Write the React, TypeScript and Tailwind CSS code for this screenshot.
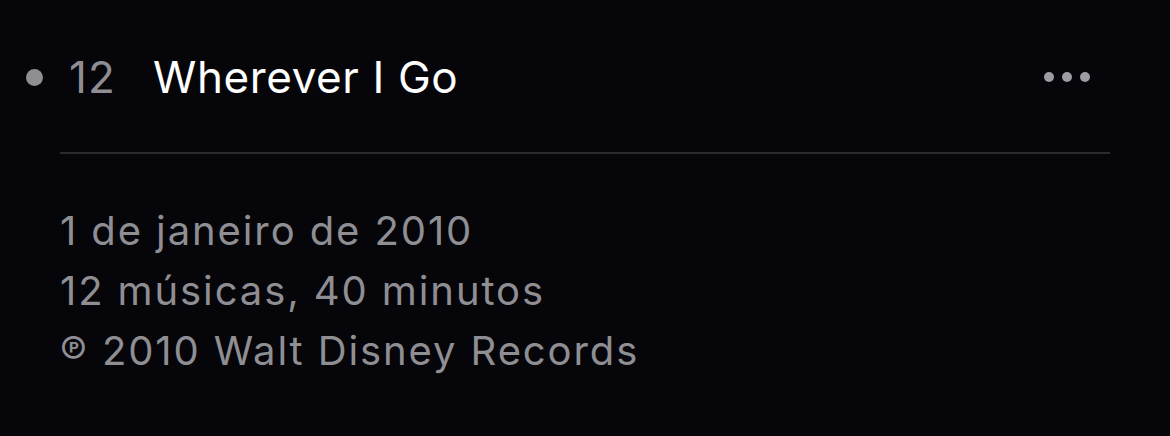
export default function App() {
  const info = ["1 de janeiro de 2010", "12 músicas, 40 minutos", "℗ 2010 Walt Disney Records"];
  return (
    <div className="w-[1170px] h-[436px] bg-[#060509] font-['Inter',sans-serif] overflow-hidden">
      {/* Track row */}
      <div className="flex items-center h-[152px] pt-[2px] pl-[26px] pr-[80px]">
        <span className="w-[17px] h-[17px] rounded-full bg-[#8e8e93] shrink-0" />
        <span className="ml-[26px] w-[84px] text-[44px] leading-none tracking-[1px] text-[#8e8e93]">12</span>
        <span className="flex-1 text-[44px] leading-none tracking-[0.6px] text-white">Wherever I Go</span>
        <div className="flex items-center gap-[8px]">
          <span className="w-[10px] h-[10px] rounded-full bg-[#9c9ca2]" />
          <span className="w-[10px] h-[10px] rounded-full bg-[#9c9ca2]" />
          <span className="w-[10px] h-[10px] rounded-full bg-[#9c9ca2]" />
        </div>
      </div>
      <div className="mx-[60px] h-[2px] bg-[#2a2a2e]" />

      {/* Album info */}
      <div className="pt-[47px] pl-[60px] text-[40px] leading-[60px] tracking-[1.9px] text-[#8e8e93]">
        {info.map((line) => (
          <div key={line}>{line}</div>
        ))}
      </div>
    </div>
  );
}
